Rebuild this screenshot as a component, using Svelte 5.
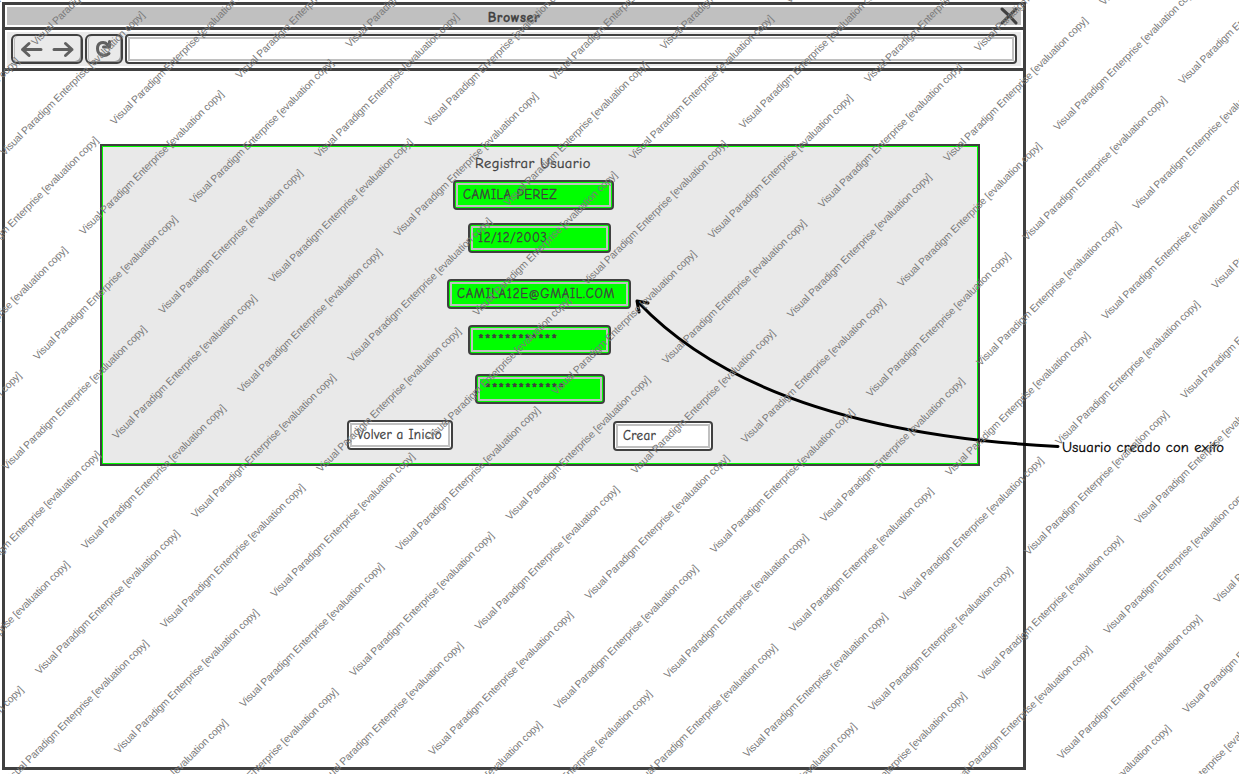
<script>
  const fields = [
    { text: 'CAMILA PEREZ', kind: 'name' },
    { text: '12/12/2003', kind: 'date' },
    { text: 'CAMILA12E@GMAIL.COM', kind: 'email' },
    { text: '************', kind: 'pass' },
    { text: '************', kind: 'repeat' }
  ];

  const marks = [];
  for (let i = -8; i < 18; i++) {
    for (let k = -8; k < 12; k++) {
      const x = 39.4 + i * 79.08 + k * 156.2;
      const y = 674.8 + i * 79.08 - k * 156.2;
      for (const [px, py] of [[x, y], [x + 125.2, y - 46.2]]) {
        if (px > -135 && px < 1239 && py > 3 && py < 910) marks.push({ x: px, y: py });
      }
    }
  }
</script>

<main>
  <section class="window">
    <header class="title">
      <span>Browser</span>
      <svg class="close" width="20" height="18" viewBox="0 0 20 18"><path d="M3 2Q10 8 17 16M17 2L3 16" /></svg>
    </header>
    <nav>
      <div class="tool history">
        <svg width="64" height="26" viewBox="0 0 64 26"><path d="M26 13.500H7.500M14 7.500L7.500 13.500L14 19.500M39 13.500H57M50.500 7.500L57 13.500L50.500 19.500" /></svg>
      </div>
      <div class="tool reload">
        <svg width="30" height="26" viewBox="0 0 30 26"><path d="M18.500 8.500C15 5 8.500 6 8.500 12.500C8.500 19.500 15.500 21 20 17.500M20.500 5.500V11H14.500" /></svg>
      </div>
      <div class="box address"><div class="inner"></div></div>
    </nav>
    <div class="page">
      <form class="panel">
        <h1>Registrar Usuario</h1>
        {#each fields as f}
          <div class="box green {f.kind}"><div class="inner"><span>{f.text}</span></div></div>
        {/each}
        <div class="actions">
          <div class="box back"><div class="inner"><span>Volver a Inicio</span></div></div>
          <div class="box create"><div class="inner"><span>Crear</span></div></div>
        </div>
      </form>
    </div>
  </section>
  <aside><span>Usuario creado con exito</span></aside>

  <svg class="overlay" width="1239" height="774" viewBox="0 0 1239 774">
    <path class="arrow" d="M1058 446.500Q760 431 638 302" />
    <path class="head" d="M648 303L637 301L639 312" />
    {#each marks as m}
      <text transform="translate({m.x} {m.y}) rotate(-45)" textLength="199">Visual Paradigm Enterprise [evaluation copy]</text>
    {/each}
  </svg>
</main>

<style>
  :global(body) { margin: 0; background: #fff; }
  main {
    position: relative; box-sizing: border-box; width: 1239px; height: 774px;
    padding: 2px 0 0 2px; overflow: hidden; display: flex; align-items: flex-start;
    font-family: "Comic Sans MS", "Comic Neue", "Open Sans", sans-serif; color: #404040;
    -webkit-text-stroke: 0.3px currentColor;
  }
  .window { box-sizing: border-box; flex: none; width: 1024px; height: 768px; border: 3px solid #404040; }
  .title {
    position: relative; height: 18px; border: 2px solid #fff; background: #c0c0c0;
    display: flex; justify-content: center; align-items: center;
    font-size: 14px; font-weight: 700; line-height: 18px; letter-spacing: 0.6px;
  }
  .title span { margin-top: 3px; }
  .close { position: absolute; right: 2px; top: 0; }
  path { fill: none; stroke: #404040; stroke-width: 3; stroke-linecap: round; stroke-linejoin: round; }
  nav {
    box-sizing: border-box; height: 44px; border-top: 3px solid #404040; border-bottom: 3px solid #404040;
    background: #eaeaea; display: flex; gap: 2px; padding: 4px 6px; box-shadow: inset 0 0 0 2px #fff;
  }
  .tool {
    box-sizing: border-box; height: 30px; border: 2px solid #404040; border-radius: 6px;
    background: #eaeaea; box-shadow: inset 1px 0 #eaeaea, inset 2px 0 #bbb, inset -2px -2px 0 -1px #999;
    display: flex; justify-content: center;
  }
  .tool path { stroke: #606060; }
  .history { width: 72px; }
  .reload { width: 38px; }
  .box {
    box-sizing: border-box; height: 30px; border: 2px solid #404040; border-radius: 4px;
    background: #fff; padding: 1px; display: flex;
  }
  .address { flex: 1; }
  .inner {
    flex: 1; border: 2px solid #c0c0c0; padding-left: 5px;
    line-height: 18px; font-size: 13px; letter-spacing: 0.5px; white-space: pre;
  }
  .inner span { display: block; margin-top: 1px; }
  .green { background: #0f0; }
  .page { padding: 73px 0 0 95px; }
  .panel {
    box-sizing: border-box; width: 880px; height: 322px; border: 2px solid #404040;
    background: #e9e9e9; box-shadow: inset 0 0 0 1px #0f0;
    display: flex; flex-direction: column;
  }
  h1 {
    margin: 8px 0 6px 373px; height: 20px; font-size: 14.5px; line-height: 20px;
    font-weight: 400; letter-spacing: 0.45px;
  }
  .name { width: 161px; margin: 0 0 13px 351px; }
  .date { width: 143px; margin: 0 0 26px 366px; }
  .email { width: 184px; margin: 0 0 16px 345px; }
  .email .inner { letter-spacing: 0.7px; }
  .pass { width: 143px; margin: 0 0 19px 366px; }
  .repeat { width: 130px; margin: 0 0 16px 373px; }
  .pass .inner, .repeat .inner { font-size: 15px; letter-spacing: 0.75px; -webkit-text-stroke-width: 0.6px; }
  .pass span, .repeat span { margin-top: 1px; }
  .actions { display: flex; gap: 160px; margin-left: 245px; }
  .back { width: 106px; }
  .create { width: 100px; margin-top: 1px; }
  .actions .inner { letter-spacing: 0.36px; }
  aside {
    flex: none; margin: 436px 0 0 36px; font-size: 14.5px; line-height: 20px;
    letter-spacing: 0.25px; color: #000; white-space: pre;
  }
  .overlay { position: absolute; inset: 0; -webkit-text-stroke: 0; }
  .overlay text { font-family: "Liberation Sans", Arial, sans-serif; font-size: 10.3px; fill: #7a7a7a; }
  .arrow, .head { stroke: #000; }
</style>
